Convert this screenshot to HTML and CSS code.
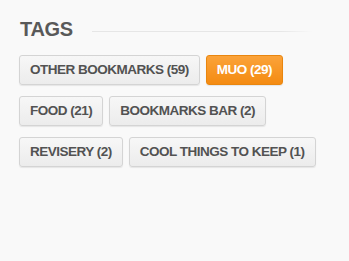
FILE: index.html
```html
<!DOCTYPE html>
<html lang="en">
<head>
  <meta charset="UTF-8">
  <meta name="viewport" content="width=device-width, initial-scale=1.0">
  <title>Tags</title>
  <link rel="stylesheet" href="styles.css">
</head>
<body>
  <div class="sidebar">
    <!-- Tags widget -->
    <div class="widget-title">
      <h3>TAGS</h3>
      <span class="title-rule"></span>
    </div>

    <div class="tag-list">
      <a class="tag" href="#">OTHER BOOKMARKS (59)</a>
      <a class="tag active" href="#">MUO (29)</a>
      <a class="tag" href="#">FOOD (21)</a>
      <a class="tag" href="#">BOOKMARKS BAR (2)</a>
      <a class="tag" href="#">REVISERY (2)</a>
      <a class="tag" href="#">COOL THINGS TO KEEP (1)</a>
    </div>
  </div>
</body>
</html>
```

FILE: styles.css
```css
body {
  font-family: "Liberation Sans", Arial, sans-serif;
  background-color: #f9f9f9;
  margin: 0;
  padding: 0;
}
.sidebar {
  min-height: 261px;
  box-sizing: border-box;
  padding: 18px 0 0 19px;
}
.widget-title {
  display: flex;
  align-items: center;
  width: 294px;
  margin-bottom: 15px;
}
.widget-title h3 {
  margin: 0;
  font-size: 20px;
  font-weight: bold;
  color: #595959;
  line-height: 22px;
  letter-spacing: -0.3px;
  padding-left: 1px;
}
.title-rule {
  flex: 1;
  height: 1px;
  margin-left: 19px;
  margin-top: 4px;
  background: linear-gradient(to right, #e6e6e6 85%, rgba(230, 230, 230, 0));
}
.tag-list {
  display: flex;
  flex-wrap: wrap;
  gap: 11px 6px;
  width: 304px;
}
.tag {
  display: inline-block;
  height: 30px;
  box-sizing: border-box;
  line-height: 28px;
  padding: 0 10px;
  font-size: 13.5px;
  font-weight: bold;
  letter-spacing: -0.5px;
  color: #525252;
  text-decoration: none;
  background: linear-gradient(#f7f7f7, #ececec);
  border: 1px solid #d4d4d4;
  border-radius: 3px;
  box-shadow: 0 1px 1px rgba(0, 0, 0, 0.08);
}
.tag.active {
  color: #fff;
  background: linear-gradient(#fba33a, #f48b12);
  border-color: #e9860f;
}
```
